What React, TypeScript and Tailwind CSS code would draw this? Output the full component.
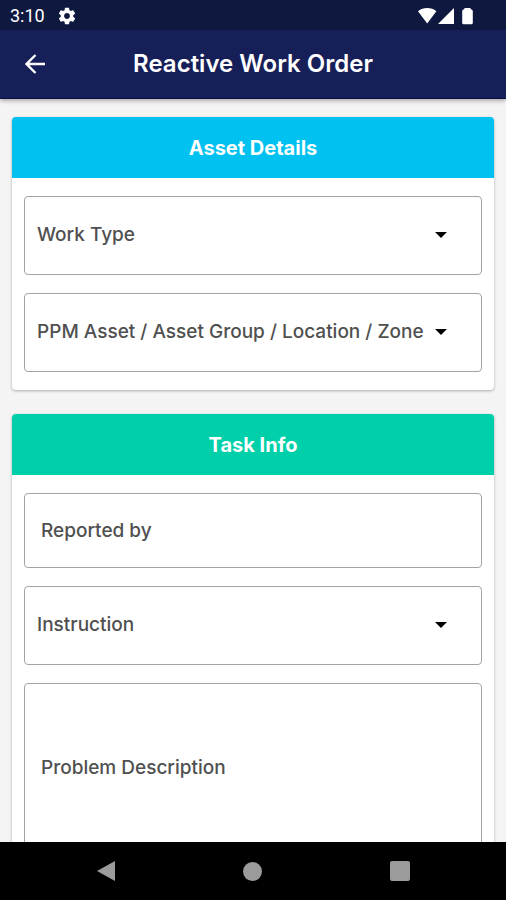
import type { ReactNode } from "react";

const FIELD =
  "block w-full rounded-[4px] border border-[#a3a3a3] bg-white text-[19px] leading-6 font-medium text-[#505050] outline-none";

function SettingsIcon() {
  return (
    <svg viewBox="0 0 24 24" className="size-5" fill="#fff" aria-hidden="true">
      <path d="M19.43 12.98c.04-.32.07-.64.07-.98s-.03-.66-.07-.98l2.11-1.65c.19-.15.24-.42.12-.64l-2-3.46c-.12-.22-.39-.3-.61-.22l-2.49 1c-.52-.4-1.08-.73-1.69-.98l-.38-2.65C14.46 2.18 14.25 2 14 2h-4c-.25 0-.46.18-.49.42l-.38 2.65c-.61.25-1.17.59-1.69.98l-2.49-1c-.23-.09-.49 0-.61.22l-2 3.46c-.13.22-.07.49.12.64l2.11 1.65c-.04.32-.07.65-.07.98s.03.66.07.98l-2.11 1.65c-.19.15-.24.42-.12.64l2 3.46c.12.22.39.3.61.22l2.49-1c.52.4 1.08.73 1.69.98l.38 2.65c.03.24.24.42.49.42h4c.25 0 .46-.18.49-.42l.38-2.65c.61-.25 1.17-.59 1.69-.98l2.49 1c.23.09.49 0 .61-.22l2-3.46c.12-.22.07-.49-.12-.64l-2.11-1.65zM12 15.5c-1.93 0-3.500-1.570-3.500-3.500s1.570-3.500 3.500-3.500 3.500 1.570 3.500 3.500-1.570 3.500-3.500 3.500z" />
    </svg>
  );
}

function StatusBar() {
  return (
    <div className="flex h-[30px] shrink-0 items-center bg-[#0f183f] pt-px pr-8 pl-[10px] text-white">
      <span className="font-['Roboto',sans-serif] text-[18px] leading-6">3:10</span>
      <span className="ml-3">
        <SettingsIcon />
      </span>
      <svg viewBox="0 0 56 18" className="ml-auto h-[18px] w-14" fill="#fff" aria-hidden="true">
        <path d="M0 4.2C2.6 2 5.800 1 9.200 1s6.600 1 9.200 3.200L9.200 16.500Z" />
        <path d="M36 1v16H20Z" />
        <path d="M46 2.600c0-.9.600-1.600 1.500-1.600h4c.9 0 1.500.7 1.500 1.600 1 0 1.800.7 1.800 1.700V16c0 .7-.5 1.200-1.200 1.200h-8.200c-.7 0-1.200-.5-1.200-1.200V4.300c0-1 .8-1.700 1.800-1.700Z" />
      </svg>
    </div>
  );
}

function AppBar() {
  return (
    <header className="z-10 grid h-[69px] shrink-0 grid-cols-[44px_1fr_44px] items-center border-b border-[#0b1046] bg-[#171f58] px-3 text-white shadow-[0_2px_4px_rgba(0,0,0,0.3)]">
      <button type="button" aria-label="Back" className="flex size-11 items-center justify-center">
        <svg viewBox="0 0 24 24" className="size-6" fill="none" stroke="#fff" strokeWidth="2.4" aria-hidden="true">
          <path d="M23 12H4M13.500 3 4.500 12l9 9" />
        </svg>
      </button>
      <h1 className="text-center text-[24px] leading-8 font-semibold whitespace-nowrap">Reactive Work Order</h1>
    </header>
  );
}

function Card({ title, tone, children }: { title: string; tone: string; children: ReactNode }) {
  return (
    <section className="overflow-hidden rounded-[4px] bg-white shadow-[0_1px_3px_rgba(0,0,0,0.3)]">
      <h2 className={`flex h-[61px] items-center justify-center text-[20px] leading-6 font-bold text-white ${tone}`}>
        {title}
      </h2>
      <div className="flex flex-col gap-[18px] px-3 py-[18px]">{children}</div>
    </section>
  );
}

function SelectField({ label }: { label: string }) {
  return (
    <div className="relative">
      <select aria-label={label} className={`${FIELD} h-[79px] appearance-none pr-[50px] pb-0.5 pl-3`}>
        <option>{label}</option>
      </select>
      <svg
        viewBox="0 0 12 6"
        className="pointer-events-none absolute top-9 right-[35px] h-1.5 w-3"
        fill="#000"
        aria-hidden="true"
      >
        <path d="M0 0h12L6 6Z" />
      </svg>
    </div>
  );
}

function NavBar() {
  return (
    <nav className="flex h-[58px] shrink-0 items-center justify-around bg-black px-8">
      <button type="button" aria-label="Back" className="flex size-12 items-center justify-center">
        <svg viewBox="0 0 20 22" className="h-[22px] w-5" fill="#9b9b9b" aria-hidden="true">
          <path d="M19 1v20L1 11Z" />
        </svg>
      </button>
      <button type="button" aria-label="Home" className="flex size-12 items-center justify-center">
        <span className="size-[19px] rounded-full bg-[#9b9b9b]" />
      </button>
      <button type="button" aria-label="Recent apps" className="flex size-12 items-center justify-center">
        <span className="size-5 rounded-[2px] bg-[#9b9b9b]" />
      </button>
    </nav>
  );
}

export default function App() {
  return (
    <div className="flex h-screen flex-col bg-[#f4f4f5] font-['Inter',sans-serif]">
      <StatusBar />
      <AppBar />
      <main className="flex min-h-0 flex-1 flex-col overflow-y-auto [scrollbar-width:none]">
        <form className="flex flex-col gap-6 px-3 py-[18px]">
          <Card title="Asset Details" tone="bg-[#00c1ef]">
            <SelectField label="Work Type" />
            <SelectField label="PPM Asset / Asset Group / Location / Zone" />
          </Card>
          <Card title="Task Info" tone="bg-[#00d0a9]">
            <input
              type="text"
              aria-label="Reported by"
              placeholder="Reported by"
              className={`${FIELD} h-[75px] px-4 placeholder:text-[#505050]`}
            />
            <SelectField label="Instruction" />
            <textarea
              aria-label="Problem Description"
              placeholder="Problem Description"
              className={`${FIELD} h-[172px] resize-none px-4 pt-[72px] placeholder:text-[#505050]`}
            />
          </Card>
        </form>
      </main>
      <NavBar />
    </div>
  );
}
